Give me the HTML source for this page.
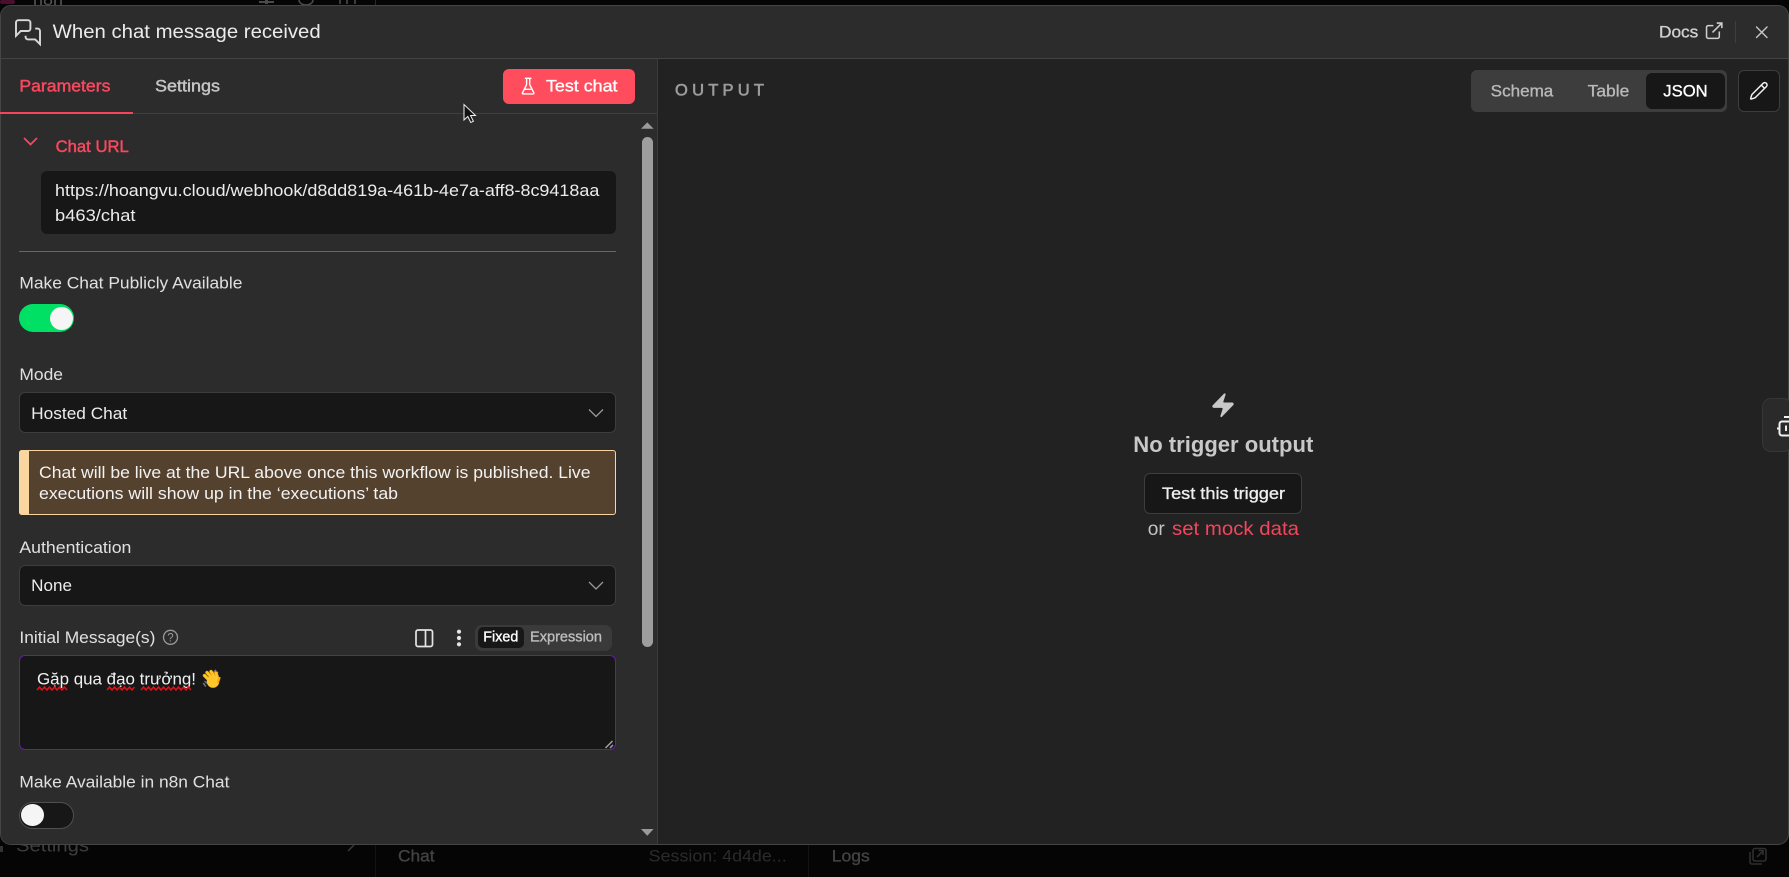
<!DOCTYPE html>
<html lang="en">
<head>
<meta charset="utf-8">
<title>When chat message received</title>
<style>
html,body{margin:0;padding:0;width:1789px;height:877px;overflow:hidden;background:#050505}
.b{position:absolute;box-sizing:border-box}
#modal{left:0;top:5px;width:1789px;height:840px;background:#222;border:1px solid #454545;border-radius:11px;overflow:hidden}
#hdr{left:0;top:0;width:1787px;height:53px;background:#2c2c2c;border-bottom:1px solid #434343}
#leftp{left:0;top:53px;width:657px;height:785px;background:#2c2c2c;border-right:1px solid #3a3a3a}
svg{position:absolute;left:0;top:0}
text{font-family:"Liberation Sans","Noto Sans CJK SC",sans-serif;font-size:16.800px}
.m{fill:currentColor;stroke:currentColor;stroke-width:.35}
.bx{background:#171717;border:1px solid #3d3d3d;border-radius:6px}
</style>
</head>
<body>
<!-- dim background app -->
<svg width="1789" height="877" viewBox="0 0 1789 877">
  <rect x="0" y="0" width="15" height="4" rx="2" fill="#4a0f2c"/>
  <text x="33" y="5" style="font-size:17px" fill="#555" textLength="30" lengthAdjust="spacingAndGlyphs">n8n</text>
  <rect x="265" y="0" width="3" height="4" fill="#4a4a4a"/><rect x="259" y="1" width="15" height="2" fill="#4a4a4a"/>
  <path d="M299 0a7 5 0 0 0 14 0" fill="none" stroke="#4a4a4a" stroke-width="1.600"/>
  <path d="M340 0v4M347 0v4M355 0v4" stroke="#4a4a4a" stroke-width="1.600"/>
  <path d="M375.500 0v5" stroke="#2a2a2a"/>
  <path d="M0 846h3v6h-3z" fill="#333"/>
  <text x="16" y="851.500" style="font-size:18.500px" fill="#3e3e3e" textLength="73" lengthAdjust="spacingAndGlyphs">Settings</text>
  <path d="M354 845l-6 6" stroke="#3a3a3a" stroke-width="1.500" fill="none"/>
  <path d="M375.500 845v32M808.500 845v32" stroke="#131313"/>
  <text x="398" y="861.500" style="color:#434343" class="m" textLength="36.500" lengthAdjust="spacingAndGlyphs">Chat</text>
  <text x="648.700" y="861.500" fill="#2b2b2b" textLength="138" lengthAdjust="spacingAndGlyphs">Session: 4d4de...</text>
  <text x="831.800" y="861.500" style="color:#434343" class="m" textLength="38" lengthAdjust="spacingAndGlyphs">Logs</text>
  <g fill="none" stroke="#2e2e2e" stroke-width="1.600">
    <rect x="1753" y="848.500" width="13" height="12.500" rx="2"/>
    <path d="M1750 852v10a2 2 0 0 0 2 2h10"/>
    <path d="M1757 857l6-6M1758.500 850.500h4.500v4.500"/>
  </g>
</svg>

<div class="b" id="modal">
  <div class="b" id="hdr"></div>
  <div class="b" id="leftp"></div>
</div>

<!-- boxes -->
<div class="b" style="left:0;top:113px;width:657px;height:1px;background:#3f3f3f"></div>
<div class="b" style="left:0;top:111.500px;width:133px;height:2.500px;background:#f5455c"></div>
<div class="b" style="left:503px;top:69px;width:132px;height:35px;background:#ff4d5e;border-radius:6px"></div>

<div class="b" style="left:41px;top:171px;width:575px;height:63px;background:#171717;border-radius:6px"></div>
<div class="b" style="left:19px;top:251px;width:597px;height:1px;background:#666"></div>

<div class="b" style="left:19px;top:304px;width:55px;height:28px;background:#00e064;border-radius:14px"></div>
<div class="b" style="left:50px;top:306.500px;width:22.500px;height:23px;background:#f5f5f5;border-radius:50%"></div>

<div class="b bx" style="left:19px;top:392px;width:597px;height:41px"></div>

<div class="b" style="left:19px;top:450px;width:597px;height:65px;background:#54422e;border:1px solid #f9d5a0;border-radius:3px"></div>
<div class="b" style="left:19px;top:450px;width:9.500px;height:65px;background:#f9d5a0;border-radius:3px 0 0 3px"></div>

<div class="b bx" style="left:19px;top:565px;width:597px;height:41px"></div>

<div class="b" style="left:475px;top:624.500px;width:136.500px;height:26.500px;background:#3a3a3a;border-radius:7px"></div>
<div class="b" style="left:478px;top:627px;width:46px;height:21px;background:#171717;border-radius:5px"></div>

<div class="b" style="left:19px;top:655px;width:597px;height:95px;background:#171717;border:1.500px solid #6a18b8;border-radius:6px"></div>

<div class="b" style="left:19px;top:802px;width:55px;height:27px;background:#171717;border:1px solid #505050;border-radius:14px"></div>
<div class="b" style="left:21px;top:804px;width:22.500px;height:22px;background:#f5f5f5;border-radius:50%"></div>

<div class="b" style="left:642px;top:137px;width:11px;height:510px;background:#9e9e9e;border-radius:5.500px"></div>

<div class="b" style="left:1471px;top:70px;width:256px;height:42px;background:#3d3d3d;border-radius:6px"></div>
<div class="b" style="left:1646px;top:73px;width:79px;height:36px;background:#171717;border-radius:6px"></div>
<div class="b bx" style="left:1738px;top:70px;width:42px;height:42px"></div>

<div class="b bx" style="left:1144px;top:473px;width:158px;height:41px"></div>

<div class="b" style="left:1762px;top:398px;width:30px;height:54px;background:#2a2a2a;border:1px solid #363636;border-radius:9px"></div>

<!-- text + icons -->
<svg width="1789" height="877" viewBox="0 0 1789 877">
  <!-- header -->
  <g transform="translate(13.600,17.800) scale(1.200)" fill="none" stroke="#d8d8d8" stroke-width="1.600" stroke-linejoin="miter">
    <path d="M14 9a2 2 0 0 1-2 2H6l-4 4V4a2 2 0 0 1 2-2h8a2 2 0 0 1 2 2z"/>
    <path d="M18 9h2a2 2 0 0 1 2 2v11l-4-4h-6a2 2 0 0 1-2-2v-1"/>
  </g>
  <text x="52.700" y="37.800" style="font-size:19.300px" fill="#ececec" textLength="268" lengthAdjust="spacingAndGlyphs">When chat message received</text>
  <text x="1659" y="37.500" style="color:#cfcfcf" class="m" textLength="39.300" lengthAdjust="spacingAndGlyphs">Docs</text>
  <g transform="translate(1704,20.500) scale(.85)" fill="none" stroke="#cfcfcf" stroke-width="1.800">
    <path d="M15 3h6v6"/><path d="M10 14 21 3"/><path d="M18 13v6a2 2 0 0 1-2 2H5a2 2 0 0 1-2-2V8a2 2 0 0 1 2-2h6"/>
  </g>
  <path d="M1735.500 21v22" stroke="#3f3f3f"/>
  <path d="M1756.500 27l10.500 10.500M1767 27l-10.500 10.500" stroke="#c8c8c8" stroke-width="1.400" stroke-linecap="round"/>

  <!-- tabs -->
  <text x="19.400" y="91.700" style="color:#f9485f;stroke-width:.45" class="m" textLength="91" lengthAdjust="spacingAndGlyphs">Parameters</text>
  <text x="155" y="91.700" style="color:#c4c4c4;stroke-width:.45" class="m" textLength="65" lengthAdjust="spacingAndGlyphs">Settings</text>
  <g transform="translate(518.800,76.800) scale(.78)" fill="none" stroke="#fff" stroke-width="1.800" stroke-linecap="round" stroke-linejoin="round">
    <path d="M10 2v7.527a2 2 0 0 1-.211.896L4.720 20.550a1 1 0 0 0 .9 1.450h12.760a1 1 0 0 0 .9-1.450l-5.069-10.127A2 2 0 0 1 14 9.527V2"/>
    <path d="M8.500 2h7"/><path d="M7 16h10"/>
  </g>
  <text x="546" y="91.700" style="color:#fff" class="m" textLength="71.500" lengthAdjust="spacingAndGlyphs">Test chat</text>

  <!-- cursor -->
  <path d="M464 104.500v15.500l3.800-3.500 3 6 2.600-1.200-2.900-5.800h5z" fill="#111" stroke="#eee" stroke-width="1"/>

  <!-- scrollbar arrows -->
  <path d="M641 128.700l6.300-6.300 6.300 6.300z" fill="#9a9a9a"/>
  <path d="M641 829h12.600l-6.300 6.700z" fill="#9a9a9a"/>

  <!-- chat url -->
  <path d="M24 138l6.500 6.500 6.500-6.500" fill="none" stroke="#f9485f" stroke-width="1.700"/>
  <text x="55.600" y="152" style="color:#f9485f;stroke-width:.45" class="m" textLength="73.200" lengthAdjust="spacingAndGlyphs">Chat URL</text>
  <text x="55" y="195.800" fill="#ececec" textLength="544.300" lengthAdjust="spacingAndGlyphs">https://hoangvu.cloud/webhook/d8dd819a-461b-4e7a-aff8-8c9418aa</text>
  <text x="55" y="220.800" fill="#ececec" textLength="80.500" lengthAdjust="spacingAndGlyphs">b463/chat</text>

  <text x="19.400" y="288.700" fill="#e0e0e0" textLength="223" lengthAdjust="spacingAndGlyphs">Make Chat Publicly Available</text>

  <text x="19.400" y="380" fill="#e0e0e0" textLength="43.600" lengthAdjust="spacingAndGlyphs">Mode</text>
  <text x="31.200" y="419" fill="#ececec" textLength="96" lengthAdjust="spacingAndGlyphs">Hosted Chat</text>
  <path d="M589 409.500l7 7 7-7" fill="none" stroke="#9a9a9a" stroke-width="1.300"/>

  <text x="39" y="478" fill="#f2f2f2" textLength="551.500" lengthAdjust="spacingAndGlyphs">Chat will be live at the URL above once this workflow is published. Live</text>
  <text x="39" y="499" fill="#f2f2f2" textLength="359" lengthAdjust="spacingAndGlyphs">executions will show up in the ‘executions’ tab</text>

  <text x="19.400" y="553" fill="#e0e0e0" textLength="112" lengthAdjust="spacingAndGlyphs">Authentication</text>
  <text x="31.200" y="591" fill="#ececec" textLength="40.800" lengthAdjust="spacingAndGlyphs">None</text>
  <path d="M589 582l7 7 7-7" fill="none" stroke="#9a9a9a" stroke-width="1.300"/>

  <!-- initial message -->
  <text x="19.400" y="643" fill="#e0e0e0" textLength="136" lengthAdjust="spacingAndGlyphs">Initial Message(s)</text>
  <circle cx="170.500" cy="637.300" r="7" fill="none" stroke="#999" stroke-width="1.300"/>
  <text x="167.300" y="641.500" style="font-size:11.500px" fill="#999">?</text>
  <rect x="416" y="630" width="16.500" height="16.500" rx="2" fill="none" stroke="#e4e4e4" stroke-width="1.700"/>
  <path d="M425.500 630v16.500" stroke="#e4e4e4" stroke-width="1.700"/>
  <circle cx="459" cy="631.700" r="2.100" fill="#e4e4e4"/><circle cx="459" cy="638" r="2.100" fill="#e4e4e4"/><circle cx="459" cy="644.300" r="2.100" fill="#e4e4e4"/>
  <text x="483.300" y="641.500" style="font-size:14.400px;color:#fff" class="m" textLength="35" lengthAdjust="spacingAndGlyphs">Fixed</text>
  <text x="530" y="641.500" style="font-size:14.400px;color:#bdbdbd" class="m" textLength="72" lengthAdjust="spacingAndGlyphs">Expression</text>

  <text x="37" y="684.500" fill="#f0f0f0" textLength="159" lengthAdjust="spacingAndGlyphs">Gặp qua đạo trưởng!</text>
  <g fill="none" stroke="#e0141c" stroke-width="1.400">
    <path d="M37 690l2.500-3 2.500 3 2.500-3 2.500 3 2.500-3 2.500 3 2.500-3 2.500 3 2.500-3 2.500 3 2.500-3 2.500 3"/>
    <path d="M107 690l2.500-3 2.500 3 2.500-3 2.500 3 2.500-3 2.500 3 2.500-3 2.500 3 2.500-3 2.500 3 2.500-3"/>
    <path d="M141 690l2.500-3 2.500 3 2.500-3 2.500 3 2.500-3 2.500 3 2.500-3 2.500 3 2.500-3 2.500 3 2.500-3 2.500 3 2.500-3 2.500 3 2.500-3 2.500 3 2.500-3 2.500 3 2.500-3 2.500 3"/>
  </g>
  <!-- waving hand emoji -->
  <g>
    <path d="M212.500 674l3-3.500M215.500 675l2-2.500" stroke="#6f7377" stroke-width="1.800" stroke-linecap="round"/>
    <path d="M203.500 683.500l2 2.500M205 681.500l1.500 1.400" stroke="#6f7377" stroke-width="1.500" stroke-linecap="round"/>
    <g stroke="#f6a800" stroke-width="3.400" stroke-linecap="round">
      <path d="M210 681l-5.500-5.500"/><path d="M212 678l-5-5.500"/><path d="M214.500 677l-3.500-5.500"/><path d="M217.500 678l-1.500-5"/>
    </g>
    <g stroke="#ffc62c" stroke-width="2.200" stroke-linecap="round">
      <path d="M210 681l-5.500-5.500"/><path d="M212 678l-5-5.500"/><path d="M214.500 677l-3.500-5.500"/><path d="M217.500 678l-1.500-5"/>
    </g>
    <ellipse cx="213" cy="681.500" rx="6.200" ry="6.300" fill="#ffc62c"/>
    <path d="M218 682l1.500-4" stroke="#f6a800" stroke-width="2.200" stroke-linecap="round"/>
  </g>
  <path d="M605.500 748l7-7M610 748l3-3" stroke="#a0a0a0" stroke-width="1.500"/>

  <text x="19.400" y="787.300" fill="#e0e0e0" textLength="210" lengthAdjust="spacingAndGlyphs">Make Available in n8n Chat</text>

  <!-- output -->
  <text x="675" y="95.500" style="font-size:16.500px;color:#9c9c9c;stroke-width:.6" class="m" textLength="89" lengthAdjust="spacing">OUTPUT</text>
  <text x="1490.700" y="96.500" style="color:#b8b8b8" class="m" textLength="62.600" lengthAdjust="spacingAndGlyphs">Schema</text>
  <text x="1587.700" y="96.500" style="color:#b8b8b8" class="m" textLength="41.600" lengthAdjust="spacingAndGlyphs">Table</text>
  <text x="1663.300" y="96.500" style="color:#fff" class="m" textLength="44.400" lengthAdjust="spacingAndGlyphs">JSON</text>
  <g transform="translate(1749,81) scale(.82)" fill="none" stroke="#f0f0f0" stroke-width="1.800" stroke-linejoin="round">
    <path d="M21.174 6.812a1 1 0 0 0-3.986-3.987L3.842 16.174a2 2 0 0 0-.5.83l-1.321 4.352a.5.5 0 0 0 .623.622l4.353-1.320a2 2 0 0 0 .83-.497z"/>
    <path d="m15 5 4 4"/>
  </g>

  <!-- empty state -->
  <g transform="translate(1209.200,391.400) scale(1.150)" fill="#c8c8c8" stroke="#c8c8c8" stroke-width=".6" stroke-linejoin="round">
    <path d="M4 14a1 1 0 0 1-.78-1.630l9.900-10.200a.5.5 0 0 1 .86.46l-1.920 6.020A1 1 0 0 0 13 10h7a1 1 0 0 1 .78 1.630l-9.900 10.200a.5.5 0 0 1-.86-.46l1.920-6.020A1 1 0 0 0 11 14z"/>
  </g>
  <text x="1133.300" y="452" style="font-size:22.500px" font-weight="700" fill="#c8c8c8" textLength="180" lengthAdjust="spacingAndGlyphs">No trigger output</text>
  <text x="1162" y="498.800" style="color:#eee" class="m" textLength="123" lengthAdjust="spacingAndGlyphs">Test this trigger</text>
  <text x="1147.700" y="535" style="font-size:19.400px" fill="#c4c4c4" textLength="17" lengthAdjust="spacingAndGlyphs">or</text>
  <text x="1172" y="535" style="font-size:19.400px" fill="#f5455c" textLength="127" lengthAdjust="spacingAndGlyphs">set mock data</text>

  <!-- side robot -->
  <g fill="none" stroke="#f0f0f0" stroke-width="2">
    <rect x="1779.500" y="421.500" width="14" height="14" rx="2.500"/>
    <path d="M1784 417h8"/>
    <path d="M1777 428.500h2.500"/>
    <path d="M1786 425.500v5.500"/>
  </g>
</svg>
</body>
</html>
